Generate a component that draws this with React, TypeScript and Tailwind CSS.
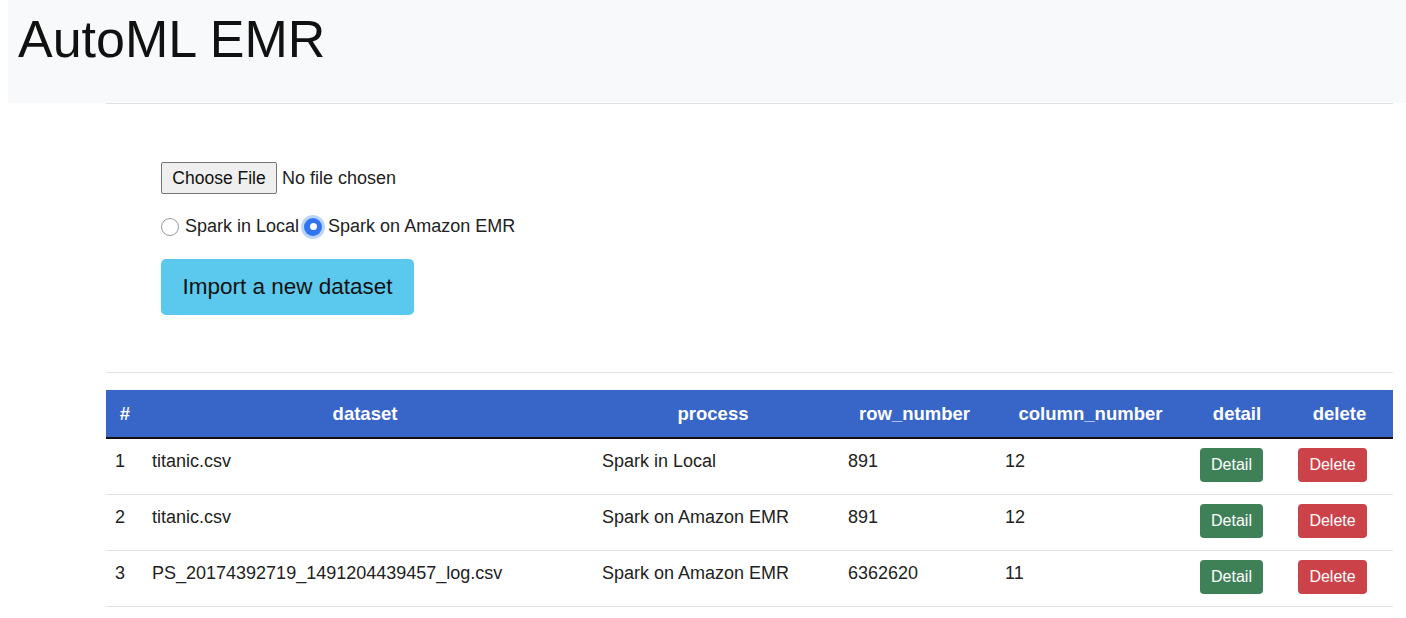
import type React from "react"

const rows = [
  { id: 1, dataset: "titanic.csv", process: "Spark in Local", rowNumber: "891", columnNumber: "12" },
  { id: 2, dataset: "titanic.csv", process: "Spark on Amazon EMR", rowNumber: "891", columnNumber: "12" },
  { id: 3, dataset: "PS_20174392719_1491204439457_log.csv", process: "Spark on Amazon EMR", rowNumber: "6362620", columnNumber: "11" },
]

function Radio({ checked }: { checked?: boolean }): React.JSX.Element {
  if (checked) {
    return (
      <span className="flex h-[18px] w-[18px] items-center justify-center rounded-full bg-[#2f74f0] ring-[3px] ring-[#bcd4fa]">
        <span className="h-[7px] w-[7px] rounded-full bg-white" />
      </span>
    )
  }
  return <span className="h-[18px] w-[18px] rounded-full border border-[#9a9a9a] bg-white" />
}

export default function App(): React.JSX.Element {
  return (
    <div className="min-h-[618px] bg-white font-['Liberation_Sans',Arial,sans-serif] text-[#212529]">
      <header className="ml-[8px] h-[103px] bg-[#f8f9fa] pl-[10px] pt-[8px]">
        <h1 className="text-[52px] leading-[62px] text-[#111]">AutoML EMR</h1>
      </header>
      <main className="mx-[106px] mr-[13px]">
        <hr className="border-t border-[#dfe3e8]" />
        <section className="grid gap-[19px] px-[55px] pt-[58px] pb-[57px]">
          <div className="flex items-center gap-[5px] text-[18px]">
            <span className="flex h-[32px] w-[116px] items-center justify-center rounded-[2px] border border-[#767676] bg-[#efefef] text-[17.5px] text-[#111]">
              Choose File
            </span>
            <span className="text-[#222]">No file chosen</span>
          </div>
          <div className="flex items-center text-[18px] text-[#222]">
            <Radio />
            <span className="ml-[6px]">Spark in Local</span>
            <span className="ml-[5px]">
              <Radio checked />
            </span>
            <span className="ml-[6px]">Spark on Amazon EMR</span>
          </div>
          <button className="h-[56px] w-[253px] rounded-[5px] bg-[#5bc9ed] text-[22.5px] text-[#111]">
            Import a new dataset
          </button>
        </section>
        <hr className="border-t border-[#dfe3e8]" />
        <table className="mt-[17px] w-full table-fixed border-collapse text-[18px]">
          <colgroup>
            <col className="w-[34px]" />
            <col className="w-[450px]" />
            <col className="w-[246px]" />
            <col className="w-[157px]" />
            <col className="w-[195px]" />
            <col className="w-[98px]" />
            <col className="w-[107px]" />
          </colgroup>
          <thead>
            <tr className="h-[48px] border-b-[2px] border-[#111] bg-[#3866c8] text-[18.5px] font-bold text-white">
              <th className="pl-[4px] text-center">#</th>
              <th className="text-center">dataset</th>
              <th className="text-center">process</th>
              <th className="text-center">row_number</th>
              <th className="text-center">column_number</th>
              <th className="text-center">detail</th>
              <th className="text-center">delete</th>
            </tr>
          </thead>
          <tbody>
            {rows.map((r) => (
              <tr key={r.id} className="h-[56px] border-b border-[#dee2e6] text-[#222]">
                <td className="pb-[9px] pl-[9px]">{r.id}</td>
                <td className="pb-[9px] pl-[12px]">{r.dataset}</td>
                <td className="pb-[9px] pl-[12px]">{r.process}</td>
                <td className="pb-[9px] pl-[12px]">{r.rowNumber}</td>
                <td className="pb-[9px] pl-[12px]">{r.columnNumber}</td>
                <td className="pb-[3px] pl-[12px]">
                  <span className="flex h-[34px] w-[63px] items-center justify-center rounded-[4px] bg-[#3e8157] text-[16px] text-white">
                    Detail
                  </span>
                </td>
                <td className="pb-[3px] pl-[12px]">
                  <span className="flex h-[34px] w-[69px] items-center justify-center rounded-[4px] bg-[#cc4249] text-[16px] text-white">
                    Delete
                  </span>
                </td>
              </tr>
            ))}
          </tbody>
        </table>
      </main>
    </div>
  )
}
